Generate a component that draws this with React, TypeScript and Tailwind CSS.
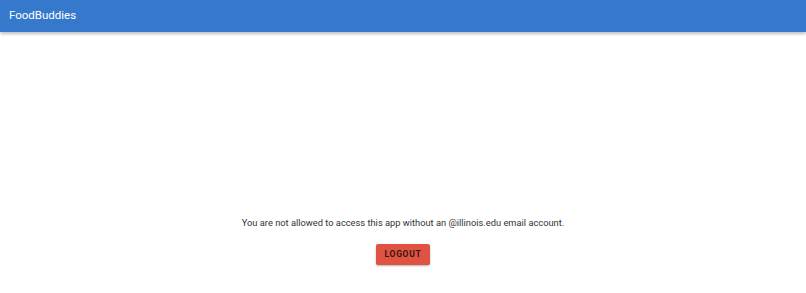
export default function App() {
  return (
    <div className="w-[806px] h-[293px] bg-white flex flex-col" style={{ fontFamily: "Roboto, 'Liberation Sans', sans-serif" }}>
      <header className="h-[32px] bg-[#3679cc] flex items-center pl-[9px] pb-[1px] shadow-[0_2px_3px_rgba(0,0,0,0.25)] shrink-0">
        <span className="text-white text-[11.5px] leading-none">FoodBuddies</span>
      </header>
      <main className="flex flex-col items-center pt-[186px]">
        <p className="text-[#333] text-[9.3px] leading-none">You are not allowed to access this app without an @illinois.edu email account.</p>
        <button className="mt-[17px] w-[54px] h-[21px] bg-[#e05343] rounded-[2px] text-[#3b1410] text-[8.5px] font-bold tracking-[0.08em] shadow-[0_1px_2px_rgba(0,0,0,0.3)]">LOGOUT</button>
      </main>
    </div>
  );
}
